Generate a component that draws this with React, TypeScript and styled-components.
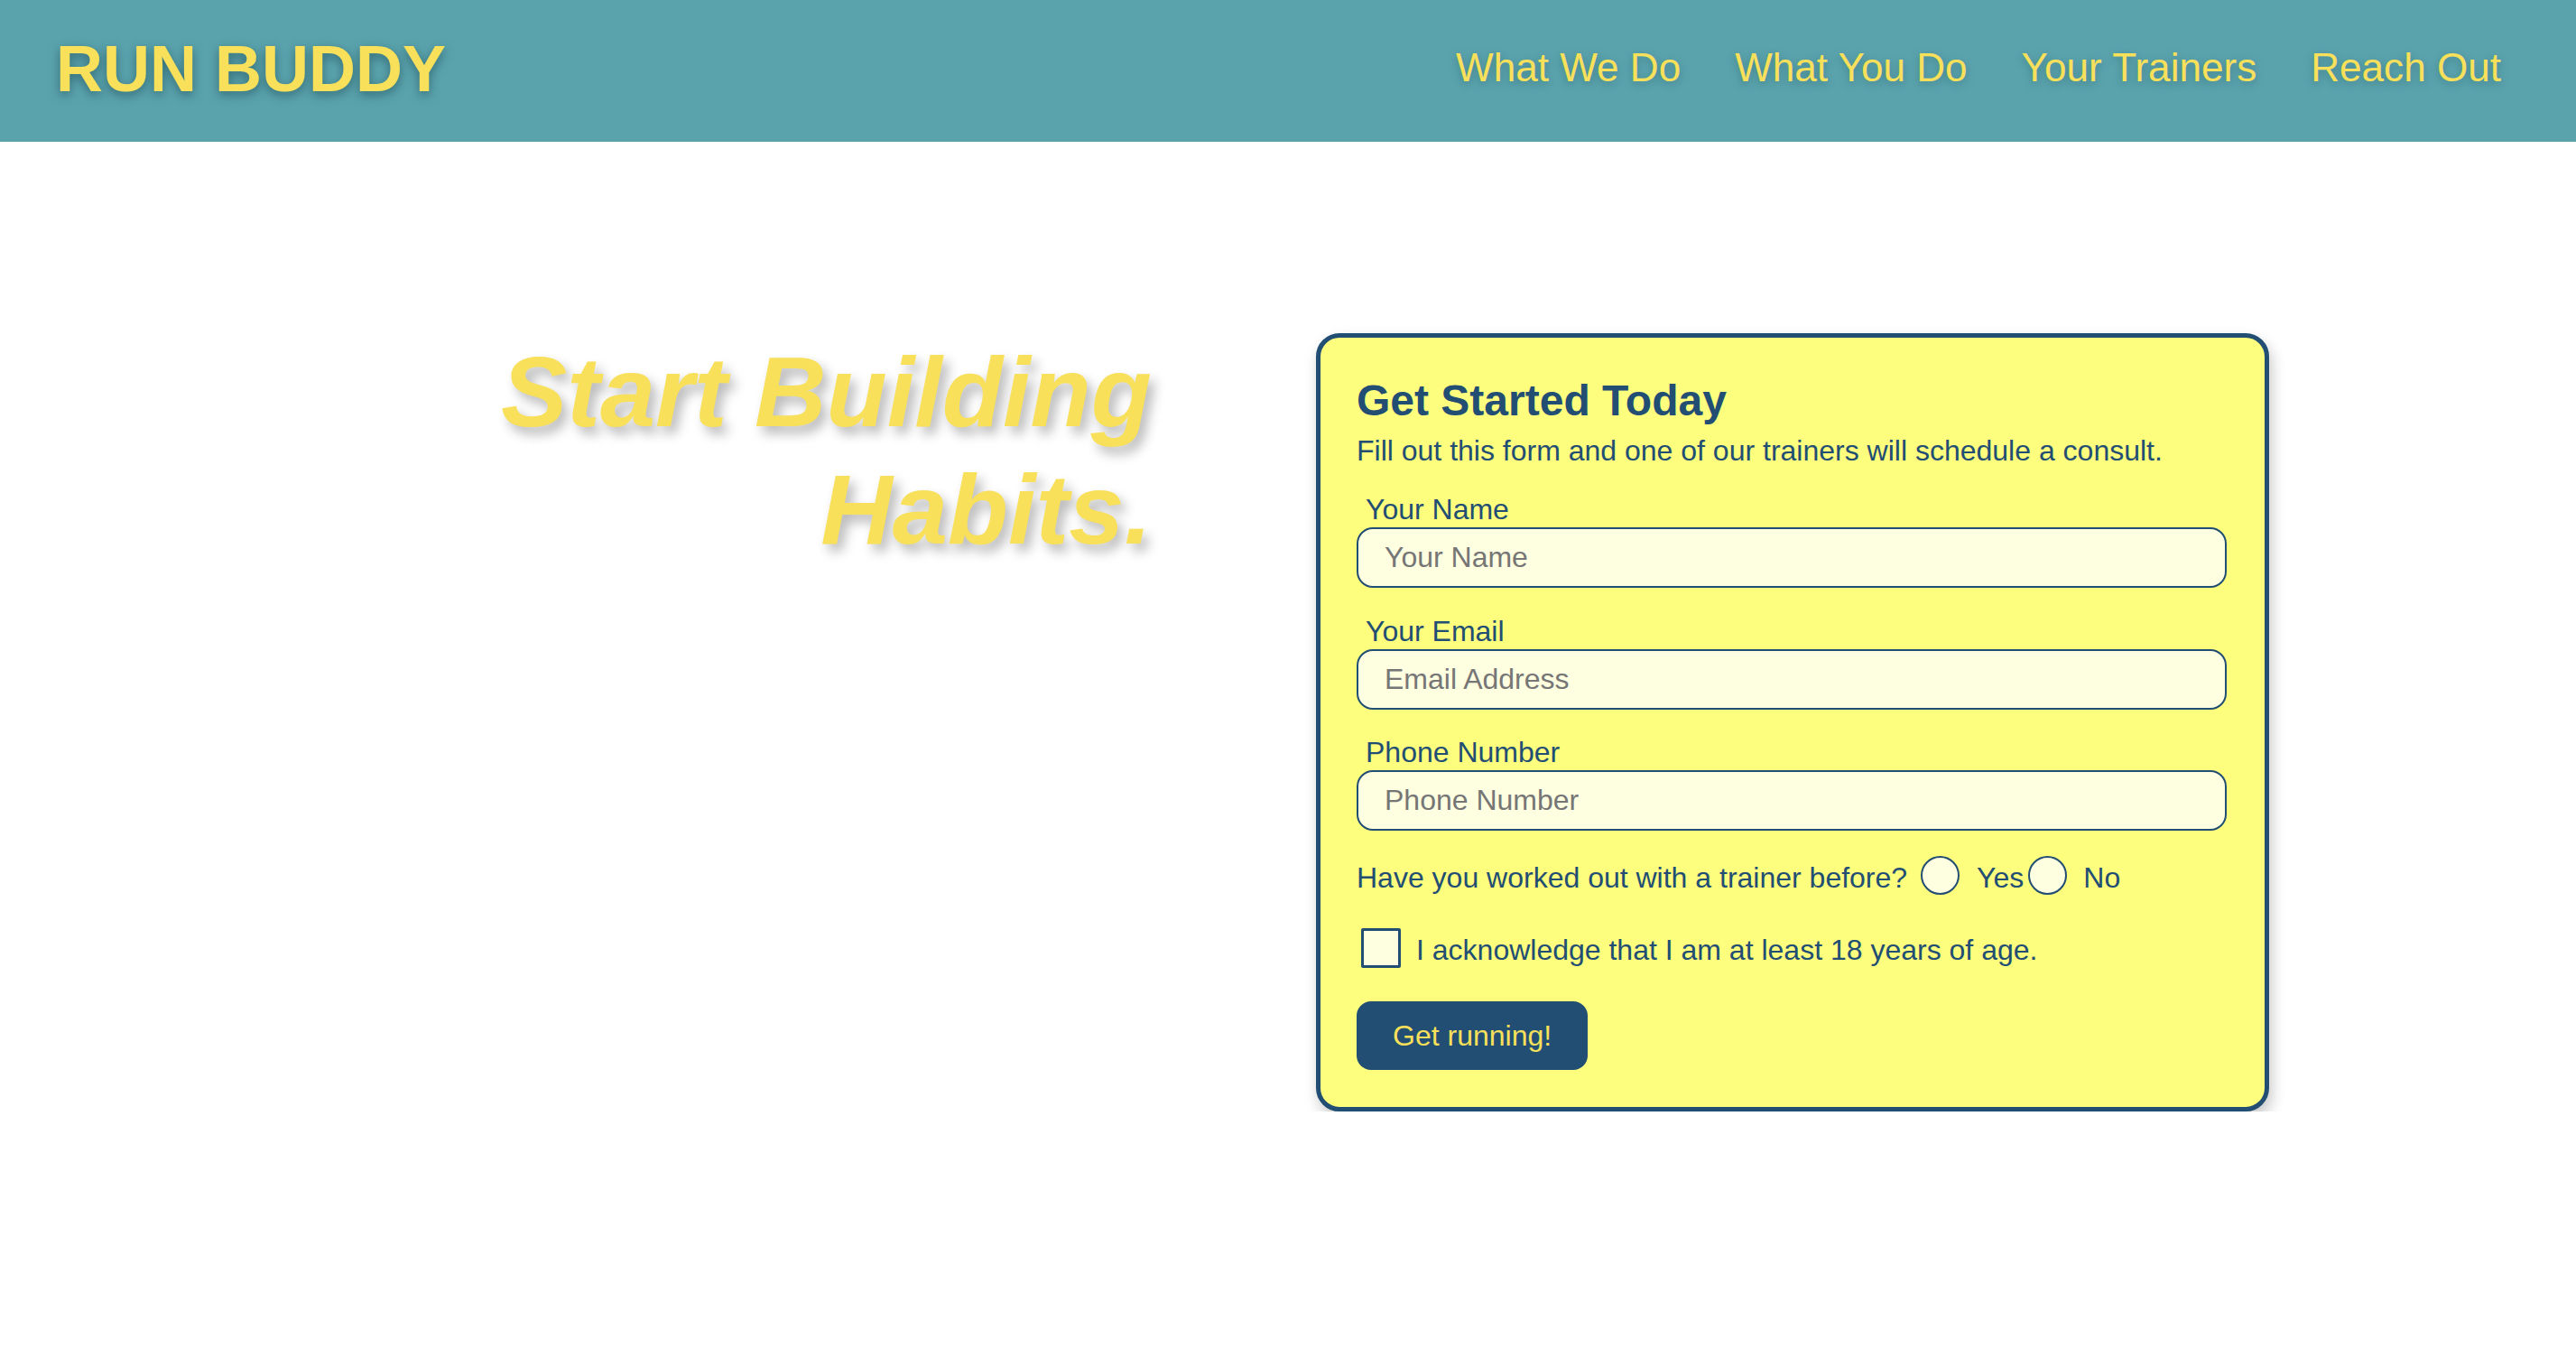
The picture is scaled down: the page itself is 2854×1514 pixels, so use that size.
import React from "react";
import styled, { createGlobalStyle } from "styled-components";

const GlobalStyle = createGlobalStyle`
  html, body { margin: 0; padding: 0; background: #ffffff; }
  body { font-family: "Liberation Sans", Arial, Helvetica, sans-serif; }
  * { box-sizing: border-box; }
`;

const yellow = "#f8e05a";
const navy = "#224e73";

const Header = styled.header`
  height: 157px;
  background: #5aa3ad;
  display: flex;
  align-items: center;
  justify-content: space-between;
  padding: 0 83px 0 62px;
`;

const Logo = styled.h1`
  margin: 0;
  font-size: 72px;
  font-weight: 700;
  color: ${yellow};
  line-height: 1;
  text-shadow: 0 4px 12px rgba(20, 60, 70, 0.55);
  margin-top: -6px;
`;

const Nav = styled.nav`
  display: flex;
  gap: 60px;
  margin-top: -8px;
`;

const NavLink = styled.a`
  font-size: 44.1px;
  color: ${yellow};
  text-decoration: none;
  text-shadow: 0 3px 10px rgba(20, 60, 70, 0.35);
`;

const Main = styled.main`
  display: flex;
  align-items: flex-start;
  gap: 182px;
  padding: 212px 340px 0 340px;
`;

const Hero = styled.h2`
  flex: 1;
  margin: 0;
  text-align: right;
  font-size: 110px;
  line-height: 130px;
  font-weight: 700;
  font-style: italic;
  color: ${yellow};
  text-shadow: 6px 8px 13px rgba(0, 0, 0, 0.28);
`;

const Card = styled.form`
  width: 1056px;
  flex: none;
  background: #fdfd7e;
  border: 5px solid ${navy};
  border-radius: 26px;
  box-shadow: 3px 8px 16px rgba(0, 0, 0, 0.22);
  padding: 46px 42px 41px 40px;
  color: ${navy};
  font-size: 32px;
  line-height: 38px;
`;

const Title = styled.h3`
  margin: 0;
  font-size: 48px;
  line-height: 48px;
  font-weight: 700;
`;

const Subtitle = styled.p`
  margin: 12px 0 0 0;
`;

const Field = styled.div<{ $gap: string }>`
  margin-top: ${(p) => p.$gap};
`;

const Label = styled.label`
  display: block;
  margin-left: 10px;
  margin-bottom: 1px;
`;

const Input = styled.input`
  display: block;
  width: 100%;
  height: 67px;
  border: 2px solid ${navy};
  border-radius: 18px;
  background: #fefee0;
  padding: 0 0 0 29px;
  font-family: inherit;
  font-size: 32px;
  color: ${navy};
  outline: none;
  &::placeholder { color: #767676; }
`;

const Row = styled.div<{ $gap: string }>`
  display: flex;
  align-items: center;
  margin-top: ${(p) => p.$gap};
`;

const Radio = styled.input<{ $ml: string }>`
  appearance: none;
  width: 43px;
  height: 43px;
  margin: 0 0 0 ${(p) => p.$ml};
  border: 2px solid ${navy};
  border-radius: 50%;
  background: #fefee0;
  flex: none;
`;

const RowText = styled.span<{ $ml?: string }>`
  margin-left: ${(p) => p.$ml || "0"};
  position: relative;
  top: 2px;
`;

const Check = styled.input`
  appearance: none;
  width: 44px;
  height: 44px;
  margin: 0 0 0 5px;
  border: 3px solid ${navy};
  border-radius: 2px;
  background: #fefee0;
  flex: none;
`;

const Button = styled.button`
  display: block;
  margin-top: 37px;
  height: 76px;
  padding: 0 40px;
  border: none;
  border-radius: 16px;
  background: ${navy};
  color: ${yellow};
  font-family: inherit;
  font-size: 32px;
  cursor: pointer;
`;

export default function App() {
  return (
    <>
      <GlobalStyle />
      <Header>
        <Logo>RUN BUDDY</Logo>
        <Nav>
          <NavLink href="#what-we-do">What We Do</NavLink>
          <NavLink href="#what-you-do">What You Do</NavLink>
          <NavLink href="#your-trainers">Your Trainers</NavLink>
          <NavLink href="#reach-out">Reach Out</NavLink>
        </Nav>
      </Header>
      <Main>
        <Hero>
          Start Building
          <br />
          Habits.
        </Hero>
        <Card onSubmit={(e) => e.preventDefault()}>
          <Title>Get Started Today</Title>
          <Subtitle>Fill out this form and one of our trainers will schedule a consult.</Subtitle>
          <Field $gap="27px">
            <Label htmlFor="name">Your Name</Label>
            <Input id="name" placeholder="Your Name" />
          </Field>
          <Field $gap="29px">
            <Label htmlFor="email">Your Email</Label>
            <Input id="email" placeholder="Email Address" />
          </Field>
          <Field $gap="28px">
            <Label htmlFor="phone">Phone Number</Label>
            <Input id="phone" placeholder="Phone Number" />
          </Field>
          <Row $gap="28px">
            <RowText>Have you worked out with a trainer before?</RowText>
            <Radio type="radio" name="trainer" $ml="15px" />
            <RowText $ml="19px">Yes</RowText>
            <Radio type="radio" name="trainer" $ml="5px" />
            <RowText $ml="18px">No</RowText>
          </Row>
          <Row $gap="37px">
            <Check type="checkbox" />
            <RowText $ml="17px">I acknowledge that I am at least 18 years of age.</RowText>
          </Row>
          <Button type="submit">Get running!</Button>
        </Card>
      </Main>
    </>
  );
}
